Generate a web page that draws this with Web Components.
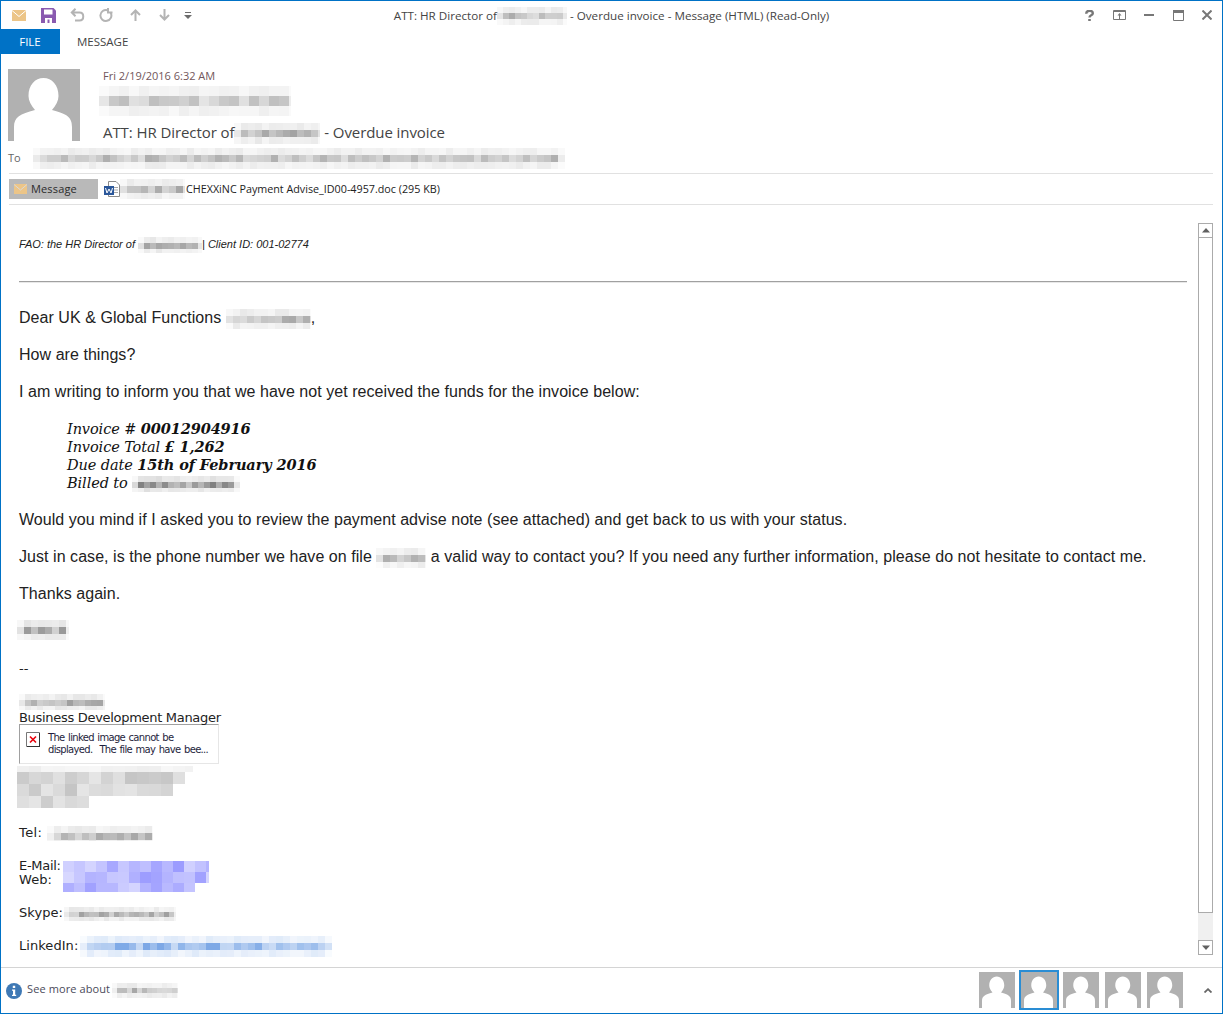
<!DOCTYPE html>
<html lang="en"><head><meta charset="utf-8"><title>Overdue invoice</title>
<style>html,body{margin:0;padding:0;background:#fff}</style></head>
<body>
<mail-window>
  <title-bar slot="top"><span>ATT: HR Director of</span><x-mosaic w="70" h="18" cell="6" seed="3" tone="170" fade></x-mosaic><span>&nbsp;- Overdue invoice - Message (HTML) (Read-Only)</span></title-bar>
  <ribbon-tabs slot="top"></ribbon-tabs>
  <message-header slot="top"></message-header>
  <attachment-bar slot="top"></attachment-bar>
  <mail-body></mail-body>
  <people-pane slot="bottom"></people-pane>
</mail-window>
<script>
const sh=(el,html)=>{el.attachShadow({mode:'open'}).innerHTML=html};
const AV=`<path fill="#fff" d="M6 72V58C6 48 12 45 27 41C23 36 20.500 32 20.500 27C20.500 16 27 9 35.500 9C44 9 50.500 16 50.500 27C50.500 32 48 36 44 41C59 45 64 48 64 58V72Z"/>`;
customElements.define('x-mosaic',class extends HTMLElement{connectedCallback(){
  const g=(n,d)=>{const v=this.getAttribute(n);return v===null?d:+v};
  const w=g('w',50),h=g('h',16),c=g('cell',8),tone=g('tone',190),dy=g('dy',0);let s=g('seed',1)*7919+13;
  const rnd=()=>{s=(s*16807)%2147483647;return s/2147483647};
  const hue=this.getAttribute('hue');const shape=(this.getAttribute('shape')||'').split(',').filter(Boolean).map(Number);
  const fade=this.hasAttribute('fade');const block=this.hasAttribute('block');
  const rows=Math.ceil((h+dy)/c),cols=Math.ceil(w/c);let r='';
  for(let i=0;i<8;i++)rnd();
  for(let y=0;y<rows;y++){const lim=shape.length?(shape[y]||0):cols;for(let x=0;x<Math.min(cols,lim);x++){
    let k=rnd();let edge=(fade&&rows>2&&(y===0||y===rows-1))?.25:1;
    if(fade&&(x===0||x===cols-1))edge*=.4;
    if(dy&&y===0)edge=.3;
    let a=(.4+.6*k)*edge;
    const col=hue||`rgb(${tone},${tone},${tone})`;
    r+=`<rect x="${x*c}" y="${y*c-dy}" width="${c}" height="${c}" fill="${col}" opacity="${a.toFixed(2)}"/>`;
  }}
  sh(this,`<style>:host{display:${block?'block':'inline-block'};width:${w}px;height:${h}px;line-height:0;${block?'':`vertical-align:middle;margin-block:${-h/2}px`}}svg{display:block}</style><svg width="${w}" height="${h}" shape-rendering="crispEdges" viewBox="0 0 ${w} ${h}" aria-hidden="true">${r}</svg>`);
}});
customElements.define('mail-window',class extends HTMLElement{constructor(){super();sh(this,`<style>:host{display:flex;flex-direction:column;box-sizing:border-box;width:1223px;height:1014px;border:1px solid #0072c6;background:#fff;overflow:hidden}
.m{flex:1;min-height:0;display:flex}</style><slot name="top"></slot><div class="m"><slot></slot></div><slot name="bottom"></slot>`)}});
customElements.define('title-bar',class extends HTMLElement{constructor(){super();sh(this,`<style>:host{display:grid;grid-template-columns:1fr auto 1fr;align-items:center;height:28px;font:11.650px/16px "Open Sans",sans-serif;color:#444;flex:none}
.l,.r{display:flex;align-items:center;height:100%}
.c{display:flex;align-items:center;white-space:nowrap;gap:0;padding-top:1px}
svg{display:block;flex:none}
.l{padding-left:11px}.r{justify-content:flex-end;padding-right:10px}
</style>
<div class="l">
<svg width="14" height="11" viewBox="0 0 14 11" style="margin-right:15px"><path fill="#ecc588" d="M0 0H14V11H0Z"/><path fill="none" stroke="#fff" d="M0 .5L7 6.500L14 .5"/></svg>
<svg width="15" height="15" viewBox="0 0 15 15" style="margin-right:14px"><path fill="#8a5ab0" d="M0 0H12.500L15 2.500V15H0Z"/><path fill="#fff" d="M3 1.500H11.500V6.500H3ZM4 10H11V15H8.500V11.500H6.500V15H4Z"/></svg>
<svg width="15" height="14" viewBox="0 0 15 14" style="margin-right:14px"><path fill="none" stroke="#b4b4b4" stroke-width="2" d="M2 4.500H9.500C14.500 4.500 14.500 12.500 9.500 12.500H5M5.500 .8L1.800 4.500L5.500 8.200"/></svg>
<svg width="14" height="14" viewBox="0 0 14 14" style="margin-right:17px"><path fill="none" stroke="#b4b4b4" stroke-width="2" d="M8.500 2.200A5.500 5.500 0 1 0 11.800 5M9 0V4.500H13.500"/></svg>
<svg width="11" height="12" viewBox="0 0 11 12" style="margin-right:18px"><path fill="none" stroke="#b4b4b4" stroke-width="2" d="M5.500 12V2M1 6L5.500 1.500L10 6"/></svg>
<svg width="11" height="12" viewBox="0 0 11 12" style="margin-right:14px"><path fill="none" stroke="#b4b4b4" stroke-width="2" d="M5.500 0V10M1 6L5.500 10.500L10 6"/></svg>
<svg width="8" height="7" viewBox="0 0 8 7"><path fill="#6d6d6d" d="M1 0H7V1H1ZM0 3H8L4 7Z"/></svg>
</div>
<div class="c"><slot></slot></div>
<div class="r">
<svg width="9" height="11" viewBox="0 0 9 11" style="margin-right:19px"><path fill="none" stroke="#777" stroke-width="2.400" d="M1.200 3.700C1.200 -.2 7.800 -.2 7.800 3.300C7.800 5.500 4.500 5 4.500 7.500"/><path fill="#777" d="M3.200 9H5.800V11H3.200Z"/></svg>
<svg width="13" height="10" viewBox="0 0 13 10" style="margin-right:18px"><path fill="none" stroke="#777" d="M.5 .5H12.500V9.500H.5Z"/><path fill="#777" d="M1 1H12V2H1ZM6 9V5.500H4.500L6.500 3L8.500 5.500H7V9Z"/></svg>
<svg width="10" height="2" viewBox="0 0 10 2" style="margin-right:19px"><path fill="#777" d="M0 0H10V2H0Z"/></svg>
<svg width="11" height="11" viewBox="0 0 11 11" style="margin-right:18px"><path fill="none" stroke="#777" d="M.5 .5H10.500V10.500H.5Z"/><path fill="#777" d="M0 0H11V3H0Z"/></svg>
<svg width="10" height="10" viewBox="0 0 10 10"><path stroke="#777" stroke-width="2" d="M.5 .5L9.500 9.500M9.500 .5L.5 9.500"/></svg>
</div>`)}});
customElements.define('ribbon-tabs',class extends HTMLElement{constructor(){super();sh(this,`<style>:host{display:flex;height:25px;flex:none;font:11.500px/25px "Open Sans",sans-serif;margin-left:-1px}
.f{width:60px;text-align:center;background:#0072c6;color:#fff}
.m{margin-left:17px;color:#444}</style><div class="f">FILE</div><div class="m">MESSAGE</div>`)}});
customElements.define('message-header',class extends HTMLElement{constructor(){super();sh(this,`<style>:host{display:block;flex:none;padding:15px 0 0 7px}
.top{display:flex;gap:23px;height:72px}
svg.a{display:block;flex:none}
.d{font:11px/14px "Open Sans",sans-serif;color:#71565a}
.s{display:block;margin:3px 0 0 -4px}
.sub{font:15px/20px "Open Sans",sans-serif;color:#444;letter-spacing:-.08px;margin-top:6px;white-space:nowrap}
.to{display:flex;align-items:center;height:18px;margin-top:8px;font:11px/18px "Open Sans",sans-serif;color:#666}
.to x-mosaic{margin-left:12px}
.line{height:1px;background:#e1e1e1;margin:6px 9px 0 1px}
</style><div class="top"><svg class="a" width="72" height="72" viewBox="0 0 72 72"><path fill="#b1b1b1" d="M0 0H72V72H0Z"/>${AV}</svg>
<div><div class="d">Fri 2/19/2016 6:32 AM</div><x-mosaic class="s" block w="192" h="30" cell="10" seed="5" tone="190" fade></x-mosaic>
<div class="sub">ATT: HR Director of<x-mosaic w="86" h="21" cell="7" seed="8" tone="160" fade></x-mosaic> - Overdue invoice</div></div></div>
<div class="to"><span>To</span><x-mosaic w="532" h="21" cell="7" seed="11" tone="175" fade></x-mosaic></div>
<div class="line"></div></message-header>`)}});
customElements.define('attachment-bar',class extends HTMLElement{constructor(){super();sh(this,`<style>:host{display:block;flex:none;padding:5px 9px 0 8px}
.row{display:flex;align-items:center;height:20px}
.b{display:flex;align-items:center;width:89px;height:20px;background:#b9b9b9;font:11px/20px "Open Sans",sans-serif;color:#2b2b2b;box-sizing:border-box;padding-left:5px;flex:none;letter-spacing:.15px}
.b svg{margin-right:4px}
.w{margin-left:6px;flex:none;display:block}
.t{font:10.750px/20px "Open Sans",sans-serif;color:#222;white-space:nowrap}
.m{flex:none;margin-right:1px}
.line{height:1px;background:#e1e1e1;margin-top:5px}
</style><div class="row"><div class="b"><svg width="13" height="10" viewBox="0 0 13 10"><path fill="#ecc588" d="M0 0H13V10H0Z"/><path fill="none" stroke="#d9d9d9" d="M0 .5L6.500 6L13 .5"/></svg>Message</div>
<svg class="w" width="16" height="16" viewBox="0 0 16 16"><path fill="#fff" stroke="#8a8a8a" d="M4.500 .5H12L15.500 4V15.500H4.500Z"/><path stroke="#a8a8a8" d="M10 6.500H14M10 9H14M10 11.500H14"/><path fill="#2b579a" d="M0 5H10V14H0Z"/><path fill="none" stroke="#fff" d="M1.500 7L3 12L5 8L7 12L8.500 7"/></svg>
<x-mosaic class="m" w="65" h="20" cell="7" seed="14" tone="165" fade></x-mosaic><span class="t">CHEXXiNC Payment Advise_ID00-4957.doc (295 KB)</span></div><div class="line"></div>`)}});
customElements.define('scroll-rail',class extends HTMLElement{constructor(){super();sh(this,`<style>:host{display:flex;flex-direction:column;width:15px;flex:none;height:732px;margin-top:18px}
.btn{height:15px;box-sizing:border-box;border:1px solid #ababab;display:flex;align-items:center;justify-content:center;flex:none}
.thumb{flex:none;height:675px;box-sizing:border-box;border:1px solid #ababab;border-top:0}
.track{flex:1;background:#f0f0f0}
</style><div class="btn"><svg width="8" height="5" viewBox="0 0 8 5"><path fill="#606060" d="M4 0L8 4.500H0Z"/></svg></div><div class="thumb"></div><div class="track"></div><div class="btn"><svg width="8" height="5" viewBox="0 0 8 5"><path fill="#606060" d="M4 5L8 .5H0Z"/></svg></div>`)}});
customElements.define('broken-image',class extends HTMLElement{constructor(){super();sh(this,`<style>:host{display:flex;box-sizing:border-box;width:200px;height:40px;border:1px solid;border-color:#a0a0a0 #e6e6e6 #e6e6e6 #a0a0a0;padding:7px 0 0 6px;font:10px/12px "DejaVu Sans",sans-serif;letter-spacing:-.68px;word-spacing:1px;color:#1e1e3c}
svg{flex:none;margin-right:8px;display:block}</style><svg width="14" height="15" viewBox="0 0 14 15"><path fill="#fff" stroke="#777" d="M.5 .5H13.500V14.500H.5Z"/><path stroke="#333" d="M1 14.500H14M13.500 1V15"/><path stroke="#e8000b" stroke-width="1.600" d="M4 4.500L10 10.500M10 4.500L4 10.500"/></svg><div>The linked image cannot be<br>displayed.&nbsp; The file may have bee...</div>`)}});
customElements.define('mail-body',class extends HTMLElement{constructor(){super();sh(this,`<style>:host{display:flex;flex:1;min-width:0;padding-right:9px;box-sizing:border-box}
.c{flex:1;min-width:0;padding:32px 0 0 18px;font:16px/18px "Liberation Sans",sans-serif;color:#222;letter-spacing:.05px;overflow:hidden}
p{margin:0 0 19px;white-space:nowrap}
.fao{font:italic 11px/14px "Liberation Sans",sans-serif;color:#222;margin:0;letter-spacing:0}
hr{border:0;border-top:1px solid #a0a0a0;border-bottom:1px solid #e8e8e8;margin:30px 11px 26px 0}
.inv{margin:0 0 19px 48px;font:italic 14.500px/18px "DejaVu Serif",serif;color:#111;letter-spacing:-.1px}
.inv b{font-weight:700}
.sig{font:13px/14px "DejaVu Sans",sans-serif;color:#222;white-space:nowrap}
.sp{height:19px}
x-mosaic[block]{margin-left:-2px}
</style><div class="c">
<p class="fao">FAO: the HR Director of <x-mosaic w="64" h="16" cell="6" seed="21" tone="160" fade></x-mosaic>| Client ID: 001-02774</p>
<hr>
<p>Dear UK &amp; Global Functions <x-mosaic w="85" h="20" cell="7" seed="23" tone="165" fade></x-mosaic>,</p>
<p>How are things?</p>
<p>I am writing to inform you that we have not yet received the funds for the invoice below:</p>
<div class="inv"><div>Invoice # <b>00012904916</b></div><div>Invoice Total <b>£ 1,262</b></div><div>Due date <b>15th of February 2016</b></div><div>Billed to <x-mosaic w="108" h="16" cell="6" seed="27" tone="120" fade></x-mosaic></div></div>
<p>Would you mind if I asked you to review the payment advise note (see attached) and get back to us with your status.</p>
<p>Just in case, is the phone number we have on file <x-mosaic w="50" h="20" cell="7" seed="29" tone="175" fade></x-mosaic> a valid way to contact you? If you need any further information, please do not hesitate to contact me.</p>
<p style="margin-bottom:17px">Thanks again.</p>
<p style="margin-bottom:22px"><x-mosaic style="margin-left:-2px" w="52" h="20" cell="7" seed="31" tone="150" fade></x-mosaic></p>
<div class="sig" style="line-height:18px;margin-bottom:16px">--</div>
<div class="sig" style="height:14px;line-height:14px"><x-mosaic w="86" h="16" cell="6" seed="33" tone="150" fade></x-mosaic></div>
<div class="sig" style="margin-top:3px;height:14px;letter-spacing:-.3px">Business Development Manager</div>
<broken-image style="margin-top:-1px"></broken-image>
<x-mosaic block w="176" h="42" cell="12" dy="6" shape="15,14,13,6" seed="37" tone="195" style="margin-top:2px"></x-mosaic>
<div class="sig" style="margin-top:18px"><span style="letter-spacing:.4px">Tel:</span> <x-mosaic w="106" h="15" cell="7" seed="39" tone="165" fade></x-mosaic></div>
<div class="sp"></div>
<div style="position:relative"><div class="sig" style="letter-spacing:-.3px">E-Mail:</div><div class="sig">Web:</div><x-mosaic block w="146" h="31" cell="11" shape="14,14,12" seed="41" hue="#9c9cff" style="position:absolute;left:44px;top:2px;margin:0"></x-mosaic></div>
<div class="sp"></div>
<div class="sig"><span>Skype:</span> <x-mosaic style="margin-left:-3px" w="112" h="14" cell="5" seed="43" tone="160" fade></x-mosaic></div>
<div class="sp"></div>
<div class="sig">LinkedIn: <x-mosaic style="margin-left:-3px" w="252" h="21" cell="7" seed="47" hue="#7ba7e6" fade></x-mosaic></div>
</div><scroll-rail></scroll-rail>`)}});
customElements.define('people-pane',class extends HTMLElement{constructor(){super();
const p=(s)=>`<svg class="${s?'sel':''}" width="36" height="36" viewBox="0 0 72 72"><path fill="#b1b1b1" d="M0 0H72V72H0Z"/>${AV}</svg>`;
sh(this,`<style>:host{display:flex;align-items:center;flex:none;height:46px;border-top:1px solid #d4d4d4;margin-left:-1px;padding-left:6px;box-sizing:border-box;font:11px/16px "Open Sans",sans-serif;color:#4a4a5a;letter-spacing:.1px}
.i{flex:none;display:block;margin-right:5px}
.t{margin-top:-3px}
.m{margin-left:2px}
.sp{flex:1}
.ps{display:flex;align-items:center;gap:6px;margin:-2px 21px 0 0}
.ps svg{display:block}
.ps svg.sel{box-sizing:content-box;border:2px solid #2a8dd4;margin:0 -2px}
.ch{margin-right:10px;display:block;flex:none}
</style><svg class="i" width="16" height="16" viewBox="0 0 16 16"><circle cx="8" cy="8" r="8" fill="#3f79b5"/><path fill="#fff" d="M6.800 2.800H9.200V5H6.800ZM6 6.500H9.200V11.800H10.200V13H6V11.800H7V7.700H6Z"/></svg>
<span class="t">See more about</span><x-mosaic class="m" w="66" h="15" cell="5" seed="51" tone="165" fade></x-mosaic><div class="sp"></div>
<div class="ps">${p()}${p(1)}${p()}${p()}${p()}</div>
<svg class="ch" width="8" height="5" viewBox="0 0 8 5"><path fill="none" stroke="#666" stroke-width="1.800" d="M.5 4.500L4 1.200L7.500 4.500"/></svg>`)}});
</script>
</body></html>
